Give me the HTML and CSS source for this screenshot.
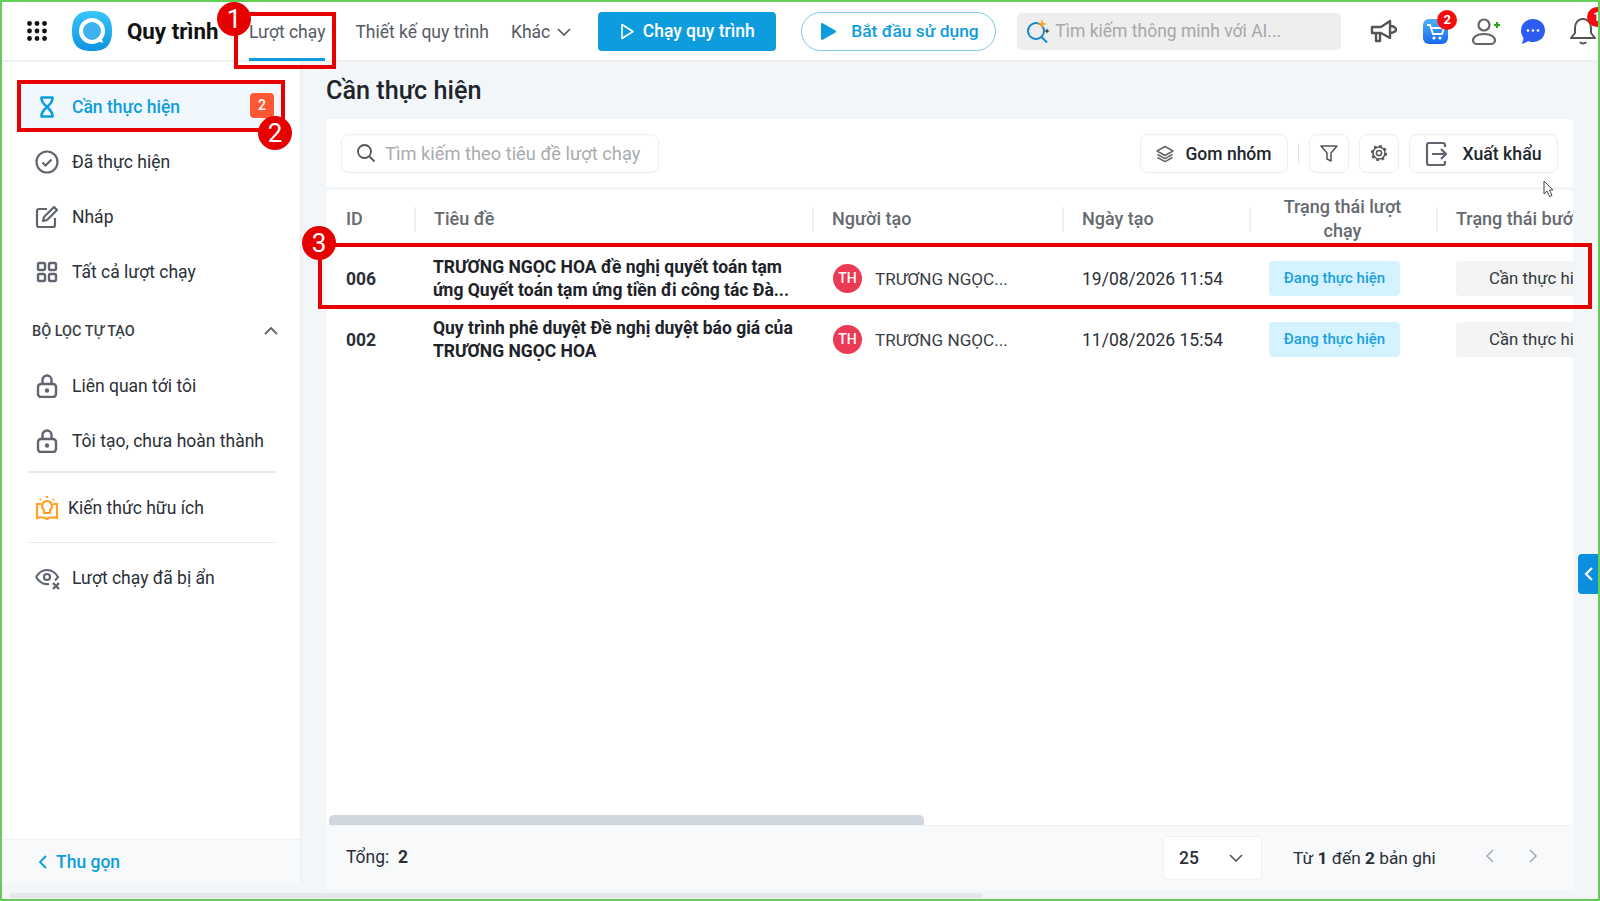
FILE: index.html
```html
<!DOCTYPE html>
<html lang="vi">
<head>
    <meta charset="UTF-8">
    <meta name="viewport" content="width=device-width, initial-scale=1.0">
    <title>Quy trình - Cần thực hiện</title>
    <link rel="stylesheet" href="styles.css">
</head>
<body>
<div class="frame">
    <header class="topbar">
        <svg class="apps" width="20" height="20" viewBox="0 0 20 20" fill="#111">
            <circle cx="2.5" cy="2.5" r="2.4"/><circle cx="10" cy="2.5" r="2.4"/><circle cx="17.5" cy="2.5" r="2.4"/>
            <circle cx="2.5" cy="10" r="2.4"/><circle cx="10" cy="10" r="2.4"/><circle cx="17.5" cy="10" r="2.4"/>
            <circle cx="2.5" cy="17.5" r="2.4"/><circle cx="10" cy="17.5" r="2.4"/><circle cx="17.5" cy="17.5" r="2.4"/>
        </svg>
        <svg class="logo" width="40" height="40" viewBox="0 0 40 40">
            <defs>
                <linearGradient id="lg" x1="0" y1="0" x2="0" y2="1">
                    <stop offset="0" stop-color="#38c6fa"/><stop offset="1" stop-color="#0e93de"/>
                </linearGradient>
            </defs>
            <path d="M20 0C33 0 40 5 40 20S33 40 20 40 0 35 0 20 7 0 20 0Z" fill="url(#lg)"/>
            <circle cx="20" cy="20" r="11" fill="#3db2ee" stroke="#fff" stroke-width="4"/>
            <path d="M23 29l8 3-2-8z" fill="#fff"/>
        </svg>
        <span class="app-name">Quy trình</span>
        <nav class="nav">
            <a class="nav-link active">Lượt chạy</a>
            <a class="nav-link">Thiết kế quy trình</a>
            <a class="nav-link more">Khác
                <svg width="14" height="8" viewBox="0 0 14 8" fill="none" stroke="#555" stroke-width="1.6"><path d="M1 1l6 6 6-6"/></svg>
            </a>
        </nav>
        <button class="btn-run">
            <svg width="15" height="17" viewBox="0 0 15 17" fill="none" stroke="#fff" stroke-width="1.6"><path d="M2 1.5v14l11-7z" stroke-linejoin="round"/></svg>
            Chạy quy trình
        </button>
        <button class="btn-start">
            <svg width="15" height="17" viewBox="0 0 15 17" fill="#0d9ddf"><path d="M0 1.2C0 .3 1 -.2 1.700 .3L14.500 7.500c.7.4.7 1.500 0 1.900L1.700 16.700C1 17.200 0 16.700 0 15.800Z"/></svg>
            Bắt đầu sử dụng
        </button>
        <div class="ai-search">
            <svg width="24" height="26" viewBox="0 0 24 26" fill="none">
                <circle cx="10" cy="13" r="8" stroke="#1287c9" stroke-width="2"/>
                <path d="M15.500 19l5.500 5.500" stroke="#1287c9" stroke-width="2"/>
                <path d="M16 1l1.200 3.800L21 6l-3.800 1.200L16 11l-1.200-3.800L11 6l3.800-1.200z" fill="#f9a230"/>
                <path d="M21 10l.7 2.300L24 13l-2.300.7L21 16l-.7-2.300L18 13l2.300-.7z" fill="#333"/>
            </svg>
            <span>Tìm kiếm thông minh với AI...</span>
        </div>
        <svg class="tool-megaphone" width="27" height="25" viewBox="0 0 27 25" fill="none" stroke="#555" stroke-width="2.400" stroke-linejoin="round">
            <path d="M2 8h9l9-6v17l-9-5H2z"/><path d="M6 14v8h4v-8"/><path d="M20 7c4 0 6 2 6 3.500S24 14 20 14"/>
        </svg>
        <div class="tool-cart">
            <svg width="25" height="25" viewBox="0 0 25 25">
                <defs>
                    <linearGradient id="cg" x1="0" y1="0" x2="0" y2="1">
                        <stop offset="0" stop-color="#4fb2f8"/><stop offset="1" stop-color="#1668ef"/>
                    </linearGradient>
                </defs>
                <rect width="25" height="25" rx="6" fill="url(#cg)"/>
                <path d="M4 6h3l3 9h9l2-6H8" fill="none" stroke="#fff" stroke-width="1.800"/>
                <circle cx="11" cy="19" r="1.600" fill="#fff"/><circle cx="17" cy="19" r="1.600" fill="#fff"/>
            </svg>
            <span class="count">2</span>
        </div>
        <svg class="tool-person" width="29" height="27" viewBox="0 0 29 27" fill="none" stroke="#666" stroke-width="2.200">
            <circle cx="13" cy="7" r="5.500"/><path d="M13 16c-7 0-11 3-11 6.500 0 2 2 3.500 4 3.500h14c2 0 4-1.500 4-3.500 0-3.500-4-6.500-11-6.500z"/>
            <path d="M23 7h6M26 4v6" stroke="#2aa320"/>
        </svg>
        <svg class="tool-chat" width="24" height="25" viewBox="0 0 24 25">
            <path d="M12 0c7 0 12 5 12 11.500S19 23 12 23c-2 0-3.500-.3-5-1-1.500 1.500-3.500 2.500-6.500 2.800C2 23 2.500 21 2.300 18.500.8 16.500 0 14 0 11.500 0 5 5 0 12 0z" fill="#2f5cf0"/>
            <circle cx="7" cy="11.500" r="1.300" fill="#fff"/><circle cx="12" cy="11.500" r="1.300" fill="#fff"/><circle cx="17" cy="11.500" r="1.300" fill="#fff"/>
        </svg>
        <svg class="tool-bell" width="26" height="28" viewBox="0 0 26 28" fill="none" stroke="#555" stroke-width="2">
            <path d="M13 2c-5 0-8 4-8 9v5l-4 5h24l-4-5v-5c0-5-3-9-8-9z" stroke-linejoin="round"/><path d="M10 25c1 2 5 2 6 0"/>
        </svg>
        <span class="bell-count">1</span>
    </header>

    <div class="body-row">
        <aside class="sidebar">
            <div class="side-scroll">
                <a class="side-item active">
                    <svg width="24" height="24" viewBox="0 0 24 24" fill="none" stroke="#0d9ddf" stroke-width="2.600" stroke-linejoin="round"><path d="M6.500 2.500h11c.5 4-2 6.500-5.500 9.500 3.500 3 6 5.500 5.500 9.500h-11c-.5-4 2-6.500 5.500-9.500-3.500-3-6-5.500-5.500-9.500z"/></svg>
                    <span>Cần thực hiện</span>
                    <b class="side-badge">2</b>
                </a>
                <a class="side-item">
                    <svg width="24" height="24" viewBox="0 0 24 24" fill="none" stroke="#5f6470" stroke-width="2.200"><circle cx="12" cy="12" r="10.500"/><path d="M7.500 12.500l3 3 6-6"/></svg>
                    <span>Đã thực hiện</span>
                </a>
                <a class="side-item">
                    <svg width="24" height="24" viewBox="0 0 24 24" fill="none" stroke="#5f6470" stroke-width="2.200"><path d="M12 4H4a2 2 0 0 0-2 2v14a2 2 0 0 0 2 2h14a2 2 0 0 0 2-2v-7"/><path d="M19 2l3 3-10 10-4 1 1-4z" stroke-linejoin="round"/></svg>
                    <span>Nháp</span>
                </a>
                <a class="side-item">
                    <svg width="24" height="24" viewBox="0 0 24 24" fill="none" stroke="#5f6470" stroke-width="2.400"><rect x="3" y="3" width="7" height="7" rx="1.500"/><rect x="14" y="3" width="7" height="7" rx="1.500"/><rect x="3" y="14" width="7" height="7" rx="1.500"/><rect x="14" y="14" width="7" height="7" rx="1.500"/></svg>
                    <span>Tất cả lượt chạy</span>
                </a>

                <div class="side-section">
                    <span>BỘ LỌC TỰ TẠO</span>
                    <svg width="14" height="8" viewBox="0 0 14 8" fill="none" stroke="#5f6470" stroke-width="1.800"><path d="M1 7l6-6 6 6"/></svg>
                </div>

                <a class="side-item">
                    <svg width="24" height="24" viewBox="0 0 24 24" fill="none" stroke="#5f6470" stroke-width="2.400"><rect x="3" y="10" width="18" height="13" rx="3"/><path d="M7.500 10V6a4.500 4.500 0 0 1 9 0v4"/><circle cx="12" cy="16.500" r="1" fill="#5f6470"/></svg>
                    <span>Liên quan tới tôi</span>
                </a>
                <a class="side-item">
                    <svg width="24" height="24" viewBox="0 0 24 24" fill="none" stroke="#5f6470" stroke-width="2.400"><rect x="3" y="10" width="18" height="13" rx="3"/><path d="M7.500 10V6a4.500 4.500 0 0 1 9 0v4"/><circle cx="12" cy="16.500" r="1" fill="#5f6470"/></svg>
                    <span>Tôi tạo, chưa hoàn thành</span>
                </a>
                <hr class="side-line first">
                <a class="side-item tips">
                    <svg width="24" height="24" viewBox="0 0 24 24" fill="none" stroke="#ffa227" stroke-width="2.200"><path d="M6 8H2v14c4-1 7-1 10 1 3-2 6-2 10-1V8h-4"/><path d="M12 5a5 5 0 0 1 3 9v3H9v-3a5 5 0 0 1 3-9z"/><path d="M12 0v2M5 3l1 1M19 3l-1 1"/></svg>
                    <span>Kiến thức hữu ích</span>
                </a>
                <hr class="side-line">
                <a class="side-item hidden-runs">
                    <svg width="26" height="24" viewBox="0 0 26 24" fill="none" stroke="#5f6470" stroke-width="2.200"><path d="M1 11c3-5 7-7 11-7s8 2 11 7c-1 1.500-2 2.500-3 3.500M14 18c-1 .2-1.500.2-2 .2-4 0-8-2.500-11-7.200"/><circle cx="12" cy="11" r="3"/><path d="M18 17l6 6M24 17l-6 6" stroke-width="2.400"/></svg>
                    <span>Lượt chạy đã bị ẩn</span>
                </a>
            </div>
            <a class="collapse">
                <svg width="9" height="14" viewBox="0 0 9 14" fill="none" stroke="#0d9ddf" stroke-width="1.800"><path d="M8 1L2 7l6 6"/></svg>
                Thu gọn
            </a>
        </aside>

        <main class="content">
            <h1>Cần thực hiện</h1>
            <section class="toolbar">
                <div class="search">
                    <svg width="20" height="20" viewBox="0 0 20 20" fill="none" stroke="#555" stroke-width="1.800"><circle cx="8.500" cy="8.500" r="6.500"/><path d="M13.500 13.500l5 5"/></svg>
                    <span>Tìm kiếm theo tiêu đề lượt chạy</span>
                </div>
                <button class="tool-btn group">
                    <svg width="18" height="18" viewBox="0 0 18 18" fill="none" stroke="#666" stroke-width="1.500" stroke-linejoin="round"><path d="M9 1.500L17 6l-8 4.500L1 6z"/><path d="M1.500 9.500L9 13.700l7.500-4.200M1.500 12.500L9 16.700l7.500-4.200"/></svg>
                    Gom nhóm
                </button>
                <span class="tool-sep"></span>
                <button class="tool-btn square">
                    <svg width="18" height="18" viewBox="0 0 18 18" fill="none" stroke="#555" stroke-width="1.500" stroke-linejoin="round"><path d="M1 2h16l-6 7v8l-4-2V9z"/></svg>
                </button>
                <button class="tool-btn square">
                    <svg width="18" height="18" viewBox="0 0 18 18" fill="none" stroke="#555">
                        <circle cx="9" cy="9" r="2.600" stroke-width="1.500"/>
                        <circle cx="9" cy="9" r="6" stroke-width="1.500"/>
                        <circle cx="9" cy="9" r="7" stroke-width="2.200" stroke-dasharray="2.700 2.800"/>
                    </svg>
                </button>
                <button class="tool-btn export">
                    <svg width="22" height="26" viewBox="0 0 22 26" fill="none" stroke="#5f6470" stroke-width="2.200"><path d="M20 6V4a2 2 0 0 0-2-2H4a2 2 0 0 0-2 2v18a2 2 0 0 0 2 2h14a2 2 0 0 0 2-2v-2"/><path d="M7 13h14M16 8l5 5-5 5"/></svg>
                    Xuất khẩu
                </button>
            </section>

            <section class="table">
                <div class="t-head">
                    <div class="th">ID</div>
                    <div class="th">Tiêu đề</div>
                    <div class="th">Người tạo</div>
                    <div class="th">Ngày tạo</div>
                    <div class="th center">Trạng thái lượt chạy</div>
                    <div class="th last">Trạng thái bước</div>
                </div>
                <div class="t-row">
                    <div class="td id">006</div>
                    <div class="td title">TRƯƠNG NGỌC HOA đề nghị quyết toán tạm ứng Quyết toán tạm ứng tiền đi công tác Đà...</div>
                    <div class="td user"><span class="avatar">TH</span>TRƯƠNG NGỌC...</div>
                    <div class="td">19/08/2026 11:54</div>
                    <div class="td"><span class="state">Đang thực hiện</span></div>
                    <div class="td"><span class="step">Cần thực hiện</span></div>
                </div>
                <div class="t-row">
                    <div class="td id">002</div>
                    <div class="td title">Quy trình phê duyệt Đề nghị duyệt báo giá của TRƯƠNG NGỌC HOA</div>
                    <div class="td user"><span class="avatar">TH</span>TRƯƠNG NGỌC...</div>
                    <div class="td">11/08/2026 15:54</div>
                    <div class="td"><span class="state">Đang thực hiện</span></div>
                    <div class="td"><span class="step">Cần thực hiện</span></div>
                </div>
                <div class="t-space"></div>
                <div class="t-scroll"><span></span></div>
                <div class="t-foot">
                    <span class="total">Tổng:&nbsp; <b>2</b></span>
                    <div class="pager">
                        <div class="page-size">25
                            <svg width="14" height="8" viewBox="0 0 14 8" fill="none" stroke="#555" stroke-width="1.600"><path d="M1 1l6 6 6-6"/></svg>
                        </div>
                        <span class="range">Từ <b>1</b> đến <b>2</b> bản ghi</span>
                        <svg class="prev" width="9" height="14" viewBox="0 0 9 14" fill="none" stroke="#a9adb3" stroke-width="1.600"><path d="M8 1L2 7l6 6"/></svg>
                        <svg class="next" width="9" height="14" viewBox="0 0 9 14" fill="none" stroke="#a9adb3" stroke-width="1.600"><path d="M1 1l6 6-6 6"/></svg>
                    </div>
                </div>
            </section>
            <a class="side-tab">
                <svg width="9" height="14" viewBox="0 0 9 14" fill="none" stroke="#fff" stroke-width="2.200"><path d="M8 1L2 7l6 6"/></svg>
            </a>
        </main>
    </div>
    <div class="page-scroll"><span></span></div>

    <!-- red guide marks painted over the screenshot -->
    <div class="mark box-1"></div>
    <div class="mark box-2"></div>
    <div class="mark box-3"></div>
    <span class="num num-1">1</span>
    <span class="num num-2">2</span>
    <span class="num num-3">3</span>
    <svg class="cursor" width="11" height="18" viewBox="0 0 11 18" fill="#fff" stroke="#444" stroke-width="1"><path d="M1 1v13l3-3 2.500 5.500 2.500-1L6.500 10H10z"/></svg>
</div>
</body>
</html>
```

FILE: styles.css
```css
* {
    box-sizing: border-box;
}

body {
    margin: 0;
    font-family: Roboto, "Liberation Sans", sans-serif;
    color: #2b2f38;
    overflow: hidden;
}

a {
    color: inherit;
    text-decoration: none;
}

button {
    font-family: inherit;
    cursor: pointer;
}

.frame {
    position: relative;
    width: 1600px;
    height: 901px;
    border: 2px solid #62cf55;
    display: flex;
    flex-direction: column;
    overflow: hidden;
    background: #f3f6f8;
}

/* top bar */
.topbar {
    height: 60px;
    flex: none;
    background: #fff;
    border-bottom: 2px solid #eef0f2;
    display: flex;
    align-items: center;
    padding-left: 25px;
}

.apps {
    margin-right: 25px;
}

.app-name {
    margin-left: 15px;
    font-size: 22.300px;
    font-weight: 700;
    color: #111;
    width: 91px;
    white-space: nowrap;
}

.nav {
    display: flex;
    align-items: center;
    height: 100%;
    margin-left: 31px;
    gap: 20px;
    font-size: 17.500px;
    color: #555a62;
}

.nav-link {
    height: 100%;
    display: flex;
    align-items: center;
    padding-top: 3px;
    white-space: nowrap;
    border-bottom: 3px solid transparent;
    position: relative;
    top: 1px;
}

.nav-link.active {
    border-bottom-color: #0d9ddf;
    margin-right: 10px;
}

.more {
    margin-left: 2px;
}

.more svg {
    margin-left: 7px;
}

.btn-run {
    margin-left: 27px;
    width: 178px;
    height: 39px;
    background: #0d9ddf;
    color: #fff;
    border: none;
    border-radius: 4px;
    font-size: 17.500px;
    font-weight: 500;
    display: flex;
    align-items: center;
    justify-content: center;
    gap: 8px;
}

.btn-start {
    margin-left: 25px;
    width: 195px;
    height: 39px;
    background: #fff;
    color: #0d9ddf;
    border: 1.500px solid #7cc8ec;
    border-radius: 20px;
    font-size: 17.400px;
    font-weight: 500;
    display: flex;
    align-items: center;
    gap: 15px;
    padding-left: 19px;
    white-space: nowrap;
}

.ai-search {
    margin-left: 21px;
    width: 324px;
    height: 37px;
    background: #eeeeee;
    border-radius: 5px;
    display: flex;
    align-items: center;
    gap: 5px;
    padding-left: 9px;
    font-size: 17.500px;
    color: #a5a7aa;
}

.tool-megaphone {
    margin-left: 29px;
}

.tool-cart {
    position: relative;
    margin-left: 26px;
    height: 25px;
}

.count {
    position: absolute;
    top: -9px;
    right: -9px;
    width: 20px;
    height: 20px;
    border-radius: 50%;
    background: #f00d0d;
    color: #fff;
    font-size: 13px;
    font-weight: 700;
    text-align: center;
    line-height: 20px;
}

.tool-person {
    margin-left: 23px;
}

.tool-chat {
    margin-left: 21px;
}

.tool-bell {
    margin-left: 25px;
    flex: none;
}

.bell-count {
    position: absolute;
    top: 5px;
    left: 1585px;
    width: 20px;
    height: 20px;
    border-radius: 50%;
    background: #f00d0d;
    color: #fff;
    font-size: 13px;
    font-weight: 700;
    text-align: center;
    line-height: 20px;
}

/* body */
.body-row {
    flex: 1;
    min-height: 0;
    display: flex;
}

.sidebar {
    width: 299px;
    height: 821px;
    flex: none;
    background: #fff;
    border-right: 1px solid #e9edf0;
    display: flex;
    flex-direction: column;
}

.side-scroll {
    flex: 1;
    padding: 21px 16px 0 18px;
}

.side-item {
    height: 47px;
    display: flex;
    align-items: center;
    gap: 13px;
    padding-left: 15px;
    margin-bottom: 8px;
    font-size: 17.500px;
    white-space: nowrap;
    border-radius: 3px;
}

.side-item svg {
    flex: none;
}

.side-item.active {
    background: #f0f8fd;
    color: #0d9ddf;
    font-weight: 500;
    position: relative;
}

.side-badge {
    position: absolute;
    top: 10px;
    right: 10px;
    width: 24px;
    height: 25px;
    border-radius: 4px;
    background: #ff5733;
    color: #fff;
    font-size: 14px;
    font-weight: 500;
    text-align: center;
    line-height: 25px;
}

.side-section {
    height: 30px;
    margin: 21px 6px 16px 12px;
    display: flex;
    align-items: center;
    justify-content: space-between;
    font-size: 14.500px;
    font-weight: 500;
    color: #3a3f47;
}

.side-line {
    margin: 0 9px 0 8px;
    border: none;
    border-top: 1px solid #e5e7ea;
}

.side-line.first {
    border-top-width: 2px;
    margin-top: -1px;
    margin-bottom: 11px;
}

.tips {
    gap: 9px;
    margin-bottom: 11px;
}

.hidden-runs {
    gap: 11px;
    margin-top: 11px;
}

.collapse {
    height: 44px;
    flex: none;
    background: #f7f9fb;
    border-top: 1px solid #eef0f2;
    display: flex;
    align-items: center;
    gap: 9px;
    padding-left: 36px;
    font-size: 17.500px;
    font-weight: 500;
    color: #0d9ddf;
}

.content {
    flex: 1;
    min-width: 0;
    position: relative;
    padding-left: 25px;
}

h1 {
    margin: 0;
    height: 57px;
    font-size: 25.200px;
    font-weight: 500;
    line-height: 57px;
    color: #20242b;
}

.toolbar {
    width: 1247px;
    height: 68px;
    background: #fff;
    border-radius: 4px 4px 0 0;
    display: flex;
    align-items: center;
    padding: 0 15px;
    gap: 10px;
}

.search {
    width: 318px;
    height: 39px;
    margin-right: auto;
    border: 1px solid #eceef0;
    border-radius: 8px;
    display: flex;
    align-items: center;
    gap: 9px;
    padding-left: 14px;
    font-size: 18.300px;
    color: #a9abae;
    white-space: nowrap;
}

.tool-btn {
    height: 39px;
    background: #fff;
    border: 1px solid #eceef0;
    border-radius: 8px;
    display: flex;
    align-items: center;
    justify-content: center;
    padding: 2px 0 0;
    font-size: 17.500px;
    font-weight: 500;
    color: #22262d;
}

.group {
    width: 148px;
    gap: 11px;
}

.square {
    width: 40px;
    padding: 0;
}

.export {
    width: 149px;
    gap: 15px;
    font-size: 17.700px;
}

.tool-sep {
    width: 1px;
    height: 20px;
    background: #e3e5e8;
}

.table {
    width: 1247px;
    height: 700px;
    margin-top: 3px;
    background: #fff;
    display: flex;
    flex-direction: column;
    overflow: hidden;
    border-radius: 4px 4px 0 0;
}

.t-head,
.t-row {
    display: grid;
    grid-template-columns: 90px 398px 250px 187px 187px 200px;
    flex: none;
    width: 1312px;
}

.t-head {
    height: 58px;
    align-items: center;
    font-size: 18px;
    font-weight: 500;
    color: #666a70;
    line-height: 24px;
}

.th {
    padding: 0 18px;
    position: relative;
}

.th:first-child {
    padding-left: 20px;
}

.th.center {
    text-align: center;
    padding: 0 32px 0 28px;
}

.th.last {
    white-space: nowrap;
}

.th:not(.last)::after {
    content: "";
    position: absolute;
    right: 0;
    top: 50%;
    margin-top: -12px;
    width: 2px;
    height: 25px;
    background: #eef0f2;
}

.t-row {
    height: 61px;
    align-items: center;
    font-size: 17.500px;
}

.td {
    padding-left: 18px;
    white-space: nowrap;
}

.td.id {
    padding-left: 20px;
    font-weight: 700;
}

.td.title {
    white-space: normal;
    padding: 1px 14px 0 17px;
    font-size: 17.500px;
    font-weight: 700;
    line-height: 23px;
    color: #1e2229;
}

.td.user {
    display: flex;
    align-items: center;
    gap: 13px;
    padding-left: 19px;
    font-size: 17.100px;
    color: #3a3e45;
}

.avatar {
    width: 29px;
    height: 29px;
    border-radius: 50%;
    background: #ec3a55;
    color: #fff;
    font-size: 14px;
    font-weight: 500;
    text-align: center;
    line-height: 29px;
}

.state {
    display: block;
    width: 131px;
    height: 35px;
    background: #d5f3fe;
    color: #1a9fe0;
    border-radius: 4px;
    font-size: 15px;
    font-weight: 500;
    text-align: center;
    line-height: 35px;
}

.step {
    display: block;
    width: 160px;
    height: 35px;
    background: #f4f4f4;
    color: #33373d;
    border-radius: 4px;
    font-size: 16.800px;
    padding-left: 33px;
    line-height: 35px;
}

.t-space {
    flex: 1;
}

.t-scroll {
    height: 10px;
    flex: none;
    padding-left: 3px;
}

.t-scroll span {
    display: block;
    width: 595px;
    height: 10px;
    border-radius: 5px 5px 0 0;
    background: #d1d7df;
}

.t-foot {
    height: 65px;
    flex: none;
    background: #f7f9fb;
    border-top: 1px solid #f0f2f4;
    display: flex;
    align-items: flex-start;
    justify-content: space-between;
    padding: 10px 0 0 20px;
    font-size: 17.500px;
}

.total {
    margin-top: 11px;
}

.total b,
.range b {
    font-weight: 700;
}

.pager {
    display: flex;
    align-items: center;
    height: 44px;
}

.page-size {
    width: 99px;
    height: 44px;
    background: #fff;
    border: 1px solid #eef0f2;
    border-radius: 4px;
    display: flex;
    align-items: center;
    justify-content: space-between;
    padding: 0 18px 0 15px;
    font-weight: 500;
}

.range {
    margin-left: 31px;
    width: 192px;
    font-size: 17.300px;
    white-space: nowrap;
}

.prev {
    margin-top: -5px;
    margin-right: 35px;
}

.next {
    margin-top: -5px;
    margin-right: 35px;
}

.side-tab {
    position: absolute;
    top: 492px;
    right: 0;
    width: 20px;
    height: 40px;
    border-radius: 4px 0 0 4px;
    background: #0d8fe0;
    display: flex;
    align-items: center;
    justify-content: center;
}

.page-scroll {
    height: 7px;
    flex: none;
    background: #f4f5f6;
    padding-left: 8px;
}

.page-scroll span {
    display: block;
    width: 972px;
    height: 5px;
    margin-top: 1px;
    background: #e4e6e8;
    border-radius: 3px;
}

/* guide marks */
.mark {
    position: absolute;
    border: 4px solid #e60000;
    pointer-events: none;
}

.box-1 {
    left: 232px;
    top: 10px;
    width: 102px;
    height: 57px;
}

.box-2 {
    left: 15px;
    top: 78px;
    width: 268px;
    height: 52px;
}

.box-3 {
    left: 316px;
    top: 241px;
    width: 1274px;
    height: 66px;
}

.num {
    position: absolute;
    width: 34px;
    height: 34px;
    border-radius: 50%;
    background: #e60000;
    color: #fff;
    font-size: 26px;
    text-align: center;
    line-height: 34px;
}

.num-1 {
    left: 215px;
    top: 0;
}

.num-2 {
    left: 256px;
    top: 114px;
}

.num-3 {
    left: 300px;
    top: 224px;
}

.cursor {
    position: absolute;
    left: 1541px;
    top: 178px;
}
```
